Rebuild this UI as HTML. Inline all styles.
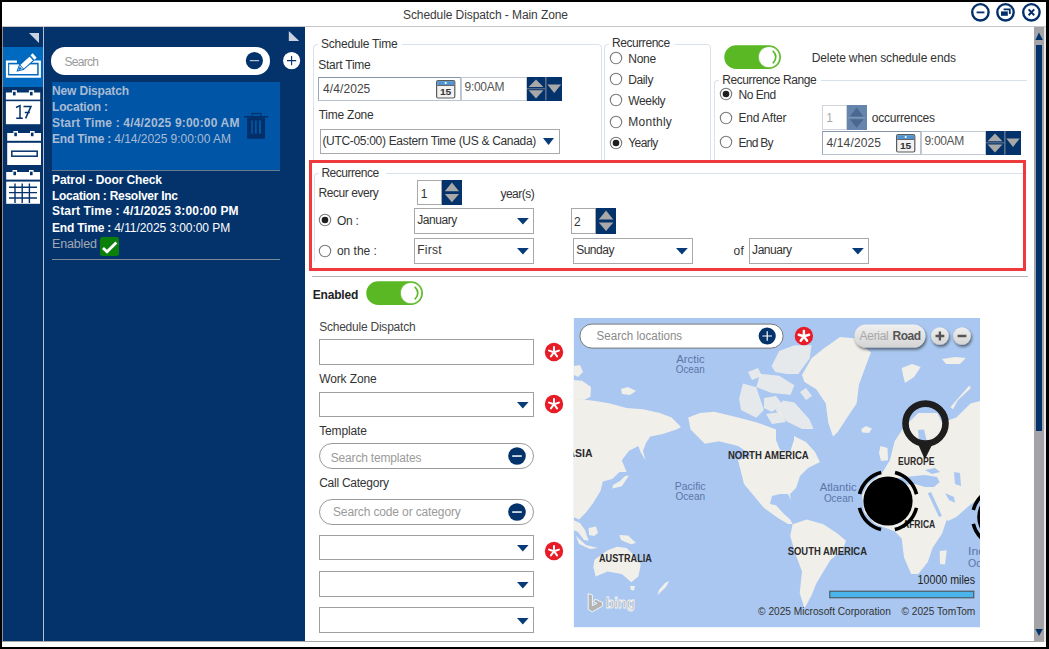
<!DOCTYPE html><html><head><meta charset="utf-8"><style>
html,body{margin:0;padding:0;width:1049px;height:649px;overflow:hidden;background:#fff}
.a{position:absolute}
.t{font-family:"Liberation Sans",sans-serif;white-space:nowrap}
</style></head><body>
<div class="a" style="left:0px;top:0px;width:1049px;height:649px;background:#fff"></div>
<div class="a t" style="left:403px;top:9px;font-size:12px;line-height:12px;color:#3a3a3a;letter-spacing:-0.086px;">Schedule Dispatch - Main Zone</div>
<div class="a" style="left:2px;top:26px;width:1044px;height:1px;background:#c8c8c8"></div>
<svg class="a" style="left:968px;top:0px;" width="76" height="26" viewBox="0 0 76 26">
<circle cx="12.4" cy="12.3" r="8.2" fill="none" stroke="#04306a" stroke-width="2.4"/>
<rect x="8.6" y="11.5" width="7.8" height="1.8" fill="#04306a"/>
<circle cx="37.5" cy="12.3" r="8.2" fill="none" stroke="#04306a" stroke-width="2.4"/>
<rect x="33" y="11.4" width="6.8" height="4.4" fill="#04306a"/>
<path d="M35.6 9.4 H41.8 V14" fill="none" stroke="#04306a" stroke-width="1.8"/>
<circle cx="63.4" cy="12.3" r="8.2" fill="none" stroke="#04306a" stroke-width="2.4"/>
<path d="M60.6 9.4 L66.2 15.2 M66.2 9.4 L60.6 15.2" stroke="#04306a" stroke-width="2"/>
</svg>
<div class="a" style="left:2px;top:27px;width:1px;height:615px;background:#8a8f98"></div>
<div class="a" style="left:3px;top:27px;width:302px;height:614px;background:#04336c"></div>
<div class="a" style="left:43px;top:27px;width:1px;height:614px;background:#b4c0d0"></div>
<div class="a" style="left:2px;top:641px;width:1044px;height:1px;background:#a8a8a8"></div>
<div class="a" style="left:3px;top:47px;width:40px;height:40px;background:#0069c0"></div>
<svg class="a" style="left:28px;top:32px;" width="12" height="12" viewBox="0 0 12 12"><path d="M1 1 H11 V11 Z" fill="#c9d3df"/></svg>
<svg class="a" style="left:3px;top:47px;" width="40" height="40" viewBox="0 0 40 40">
<path d="M14 14.6 H4 V29.6 H36.8 V14.6 H29" fill="none" stroke="#fff" stroke-width="2.2"/>
<rect x="6.2" y="17.4" width="28" height="9.6" fill="#fff"/>
<g transform="translate(14.2,24) rotate(-41.6)">
<path d="M0 0 L5.6 -3 H19.4 V3 H5.6 Z" fill="#fff" stroke="#0069c0" stroke-width="1"/>
<path d="M1.6 0 L4.8 -1.6 V1.6 Z" fill="#0069c0"/>
<rect x="5.6" y="-3" width="0.9" height="6" fill="#0069c0"/>
<rect x="20.4" y="-3" width="3" height="6" fill="#fff"/>
</g>
</svg>
<svg class="a" style="left:3px;top:86px;" width="42" height="42" viewBox="0 0 42 42">
<rect x="2.9" y="6.5" width="34.3" height="7.1" fill="#fff"/>
<rect x="9" y="4.2" width="4.9" height="3" fill="#fff"/>
<rect x="25.9" y="4.2" width="5.2" height="3" fill="#fff"/>
<rect x="10" y="5.8" width="2.6" height="3.6" fill="#04336c"/>
<rect x="27" y="5.8" width="2.6" height="3.6" fill="#04336c"/>
<rect x="2.9" y="15.2" width="34.3" height="23" fill="#fff"/>
<path d="M13 21.5 L17 19.6 V32.2 M13.2 32.2 H19.8 M20.5 20.4 H28 L22.6 32.4 M21.8 26.6 H26.8" fill="none" stroke="#04336c" stroke-width="1.5"/>
</svg>
<svg class="a" style="left:3px;top:128px;" width="42" height="42" viewBox="0 0 42 42">
<rect x="4.2" y="5" width="33.8" height="7.8" fill="#fff"/>
<rect x="10.4" y="3" width="4.6" height="3" fill="#fff"/>
<rect x="27" y="3" width="4.6" height="3" fill="#fff"/>
<rect x="11.3" y="4.6" width="2.6" height="3.6" fill="#04336c"/>
<rect x="27.9" y="4.6" width="2.6" height="3.6" fill="#04336c"/>
<rect x="4.2" y="14.8" width="33.8" height="22.2" fill="#fff"/>
<rect x="8.8" y="23.2" width="25.4" height="5" fill="none" stroke="#04336c" stroke-width="1.5"/>
</svg>
<svg class="a" style="left:3px;top:166px;" width="42" height="42" viewBox="0 0 42 42">
<rect x="3.2" y="6" width="33.8" height="7.6" fill="#fff"/>
<rect x="9.5" y="4" width="4.6" height="3" fill="#fff"/>
<rect x="26" y="4" width="4.6" height="3" fill="#fff"/>
<rect x="10.4" y="5.6" width="2.6" height="3.6" fill="#04336c"/>
<rect x="27" y="5.6" width="2.6" height="3.6" fill="#04336c"/>
<rect x="3.2" y="15.6" width="33.8" height="22.2" fill="#fff"/>
<path d="M6 21.2 H34 M6 26.6 H34 M6 32 H34 M12 17.5 V37 M19.2 17.5 V37 M26.4 17.5 V37" stroke="#04336c" stroke-width="1.4"/>
</svg>
<svg class="a" style="left:287px;top:30px;" width="13" height="12" viewBox="0 0 13 12"><path d="M1.8 1 V11 H12.2 Z" fill="#c9d3df"/></svg>
<div class="a" style="left:51px;top:47px;width:219px;height:28px;background:#fff;border-radius:14px"></div>
<svg class="a" style="left:245px;top:51px;" width="19" height="19" viewBox="0 0 19 19"><circle cx="9.4" cy="9.6" r="8.6" fill="#04336c"/><rect x="4.8" y="9.1" width="9.2" height="1.1" fill="#c8d2e0"/></svg>
<div class="a t" style="left:64.4px;top:55.7px;font-size:12px;line-height:12px;color:#9a9a9a;letter-spacing:-0.684px;">Search</div>
<svg class="a" style="left:282px;top:51px;" width="19" height="19" viewBox="0 0 19 19"><circle cx="9.6" cy="9.6" r="8.6" fill="#fff"/><path d="M9.6 5 V14.2 M5 9.6 H14.2" stroke="#04336c" stroke-width="1.1"/></svg>
<div class="a" style="left:51.5px;top:82px;width:228.6px;height:88px;background:#0055a6"></div>
<div class="a" style="left:51.5px;top:169.6px;width:228.6px;height:1px;background:#6a7a8e"></div>
<div class="a t" style="left:52px;top:84.6px;font-size:12px;line-height:12px;color:#a9bbd3;font-weight:bold;letter-spacing:-0.153px;">New Dispatch</div>
<div class="a t" style="left:52px;top:100.7px;font-size:12px;line-height:12px;color:#a9bbd3;font-weight:bold;letter-spacing:-0.148px;">Location :</div>
<div class="a t" style="left:52px;top:116.7px;font-size:12px;line-height:12px;color:#a9bbd3;font-weight:bold;letter-spacing:0.171px;">Start Time : 4/4/2025 9:00:00 AM</div>
<div class="a t" style="left:52px;top:132.7px;font-size:12px;line-height:12px;color:#a9bbd3"><b style="letter-spacing:-0.2px">End Time : </b><span style="letter-spacing:-0.04px">4/14/2025 9:00:00 AM</span></div>
<svg class="a" style="left:243px;top:111px;" width="27" height="29" viewBox="0 0 27 29">
<rect x="9.1" y="2.5" width="8.8" height="3.4" fill="none" stroke="#04306a" stroke-width="1.2"/>
<rect x="1.2" y="5" width="24" height="1.5" fill="#04306a"/>
<path d="M4.1 6.3 H22 V27.8 H4.1 Z" fill="#04306a"/>
<rect x="8.1" y="9.4" width="1.7" height="13.3" fill="#0055a6"/>
<rect x="12" y="9.4" width="1.8" height="13.3" fill="#0055a6"/>
<rect x="16" y="9.4" width="2" height="13.3" fill="#0055a6"/>
</svg>
<div class="a t" style="left:52px;top:173.8px;font-size:12px;line-height:12px;color:#ffffff;font-weight:bold;letter-spacing:-0.112px;">Patrol - Door Check</div>
<div class="a t" style="left:52px;top:189.7px;font-size:12px;line-height:12px;color:#ffffff;font-weight:bold;letter-spacing:-0.274px;">Location : Resolver Inc</div>
<div class="a t" style="left:52px;top:205.4px;font-size:12px;line-height:12px;color:#ffffff;font-weight:bold;letter-spacing:0.152px;">Start Time : 4/1/2025 3:00:00 PM</div>
<div class="a t" style="left:52px;top:221.9px;font-size:12px;line-height:12px;color:#ffffff"><b style="letter-spacing:-0.2px">End Time : </b><span style="letter-spacing:-0.07px">4/11/2025 3:00:00 PM</span></div>
<div class="a t" style="left:52px;top:237.7px;font-size:12.5px;line-height:12.5px;color:#a2a9b3;letter-spacing:-0.162px;">Enabled</div>
<div class="a" style="left:99.5px;top:237px;width:19.5px;height:19.3px;background:#0a7f0a;border-radius:2.5px"></div>
<svg class="a" style="left:99.5px;top:237px;" width="20" height="20" viewBox="0 0 20 20"><path d="M3 11 L7 14.8 L16.4 5.4" fill="none" stroke="#fff" stroke-width="2.8"/></svg>
<div class="a" style="left:52px;top:258.5px;width:228px;height:1.5px;background:#7d8a9a"></div>
<div class="a" style="left:313.2px;top:44px;width:288.4px;height:130px;border:1px solid #d9e1ea;border-radius:4px;box-sizing:border-box;"></div>
<div class="a" style="left:318px;top:43px;width:84px;height:3px;background:#fff"></div>
<div class="a t" style="left:321px;top:37.7px;font-size:12px;line-height:12px;color:#333;letter-spacing:-0.231px;">Schedule Time</div>
<div class="a t" style="left:318.2px;top:58.7px;font-size:12px;line-height:12px;color:#333;letter-spacing:-0.231px;">Start Time</div>
<div class="a" style="left:318.3px;top:77.2px;width:143.2px;height:23.4px;border:1px solid #b9c3cf;border-top-color:#8494a6;border-left-color:#9aa8b8;box-sizing:border-box;background:#fff"></div>
<div class="a t" style="left:323.1px;top:82.6px;font-size:12px;line-height:12px;color:#444;letter-spacing:0.070px;">4/4/2025</div>
<svg class="a" style="left:436px;top:79.6px;" width="20" height="19" viewBox="0 0 20 19"><rect x="0.6" y="0.6" width="18.2" height="17.4" rx="1.5" fill="#f2f2f2" stroke="#5a5a5a" stroke-width="1.2"/>
<rect x="1.2" y="1.2" width="17" height="3.8" fill="#4f93d2"/>
<circle cx="9.7" cy="3" r="1.1" fill="#fff"/>
<rect x="1.2" y="5" width="17" height="0.9" fill="#555"/>
<text x="9.6" y="15.4" font-family="Liberation Sans" font-weight="bold" font-size="9.6" text-anchor="middle" fill="#333" textLength="11.4" lengthAdjust="spacingAndGlyphs">15</text></svg>
<div class="a" style="left:461.2px;top:77.2px;width:65.5px;height:23.4px;border:1px solid #c3c9d0;box-sizing:border-box;background:#fff;"></div>
<div class="a t" style="left:464.6px;top:80.7px;font-size:12px;line-height:12px;color:#555;letter-spacing:-0.311px;">9:00AM</div>
<div class="a" style="left:526.5px;top:77.2px;width:35.1px;height:23.4px;background:#04336c"></div>
<svg class="a" style="left:526.5px;top:77.2px;" width="35.1" height="23.4" viewBox="0 0 35.1 23.4"><path d="M9.0 2.4 L16.4 10.1 H1.6 Z" fill="#a8a8a8"/>
<rect x="0" y="11.1" width="18" height="1.2" fill="#5a6e8a"/>
<path d="M1.6 13.299999999999999 H16.4 L9.0 21.4 Z" fill="#a8a8a8"/>
<rect x="18" y="0" width="1.6" height="23.4" fill="#5a6e8a"/>
<path d="M20.4 7.4 H34.1 L27.25 16 Z" fill="#a8a8a8"/></svg>
<div class="a t" style="left:318.7px;top:109.1px;font-size:12px;line-height:12px;color:#333;letter-spacing:-0.238px;">Time Zone</div>
<div class="a" style="left:319.9px;top:129.2px;width:239.7px;height:25.3px;border:1px solid #a8a8a8;box-sizing:border-box;background:#fff;"></div>
<div class="a t" style="left:322.4px;top:134.6px;font-size:12px;line-height:12px;color:#333;letter-spacing:-0.311px;">(UTC-05:00) Eastern Time (US &amp; Canada)</div>
<svg class="a" style="left:543px;top:138.4px;" width="12" height="8" viewBox="0 0 12 8"><path d="M0 0 H11 L5.5 7 Z" fill="#063a78"/></svg>
<div class="a" style="left:604px;top:44px;width:107.2px;height:130px;border:1px solid #d9e1ea;border-radius:4px;box-sizing:border-box;"></div>
<div class="a" style="left:609px;top:43px;width:66px;height:3px;background:#fff"></div>
<div class="a t" style="left:612.1px;top:37.4px;font-size:12px;line-height:12px;color:#333;letter-spacing:-0.447px;">Recurrence</div>
<svg class="a" style="left:608.5px;top:50.7px;" width="14" height="14" viewBox="0 0 14 14"><circle cx="7" cy="7" r="5.7" fill="#fff" stroke="#7a7a7a" stroke-width="1.1"/></svg>
<div class="a t" style="left:628.3px;top:52.8px;font-size:12px;line-height:12px;color:#333;letter-spacing:-0.295px;">None</div>
<svg class="a" style="left:608.5px;top:72px;" width="14" height="14" viewBox="0 0 14 14"><circle cx="7" cy="7" r="5.7" fill="#fff" stroke="#7a7a7a" stroke-width="1.1"/></svg>
<div class="a t" style="left:628.3px;top:74.1px;font-size:12px;line-height:12px;color:#333;letter-spacing:-0.393px;">Daily</div>
<svg class="a" style="left:608.5px;top:93.2px;" width="14" height="14" viewBox="0 0 14 14"><circle cx="7" cy="7" r="5.7" fill="#fff" stroke="#7a7a7a" stroke-width="1.1"/></svg>
<div class="a t" style="left:628.3px;top:94.6px;font-size:12px;line-height:12px;color:#333;letter-spacing:-0.364px;">Weekly</div>
<svg class="a" style="left:608.5px;top:114.5px;" width="14" height="14" viewBox="0 0 14 14"><circle cx="7" cy="7" r="5.7" fill="#fff" stroke="#7a7a7a" stroke-width="1.1"/></svg>
<div class="a t" style="left:628.3px;top:115.6px;font-size:12px;line-height:12px;color:#333;letter-spacing:0.247px;">Monthly</div>
<svg class="a" style="left:608.5px;top:135.9px;" width="14" height="14" viewBox="0 0 14 14"><circle cx="7" cy="7" r="5.7" fill="#fff" stroke="#7a7a7a" stroke-width="1.1"/><circle cx="7" cy="7" r="3.3" fill="#1e1e1e"/></svg>
<div class="a t" style="left:628.3px;top:136.6px;font-size:12px;line-height:12px;color:#333;letter-spacing:-0.583px;">Yearly</div>
<svg class="a" style="left:723.8px;top:44.6px;" width="58" height="25" viewBox="0 0 58 25"><rect x="0.3" y="0.3" width="56.6" height="23.8" rx="11.9" fill="#5ab825"/>
<circle cx="45" cy="12.1" r="10.7" fill="#fff" stroke="#5ab825" stroke-width="0.8"/>
<path d="M49.2 6.4 A7.6 7.6 0 0 1 49.2 17.8" fill="none" stroke="#5ab825" stroke-width="1.7" stroke-linecap="round"/></svg>
<div class="a t" style="left:811.8px;top:51.8px;font-size:12px;line-height:12px;color:#333;letter-spacing:-0.135px;">Delete when schedule ends</div>
<div class="a" style="left:714px;top:80px;width:314px;height:94px;border:1px solid #d9e1ea;border-radius:4px;box-sizing:border-box;border-right:none;border-top-right-radius:0"></div>
<div class="a" style="left:719px;top:79px;width:102px;height:3px;background:#fff"></div>
<div class="a t" style="left:722.2px;top:73.9px;font-size:12px;line-height:12px;color:#333;letter-spacing:-0.408px;">Recurrence Range</div>
<svg class="a" style="left:718.5px;top:87.3px;" width="14" height="14" viewBox="0 0 14 14"><circle cx="7" cy="7" r="5.7" fill="#fff" stroke="#7a7a7a" stroke-width="1.1"/><circle cx="7" cy="7" r="3.3" fill="#1e1e1e"/></svg>
<div class="a t" style="left:738.4px;top:88.8px;font-size:12px;line-height:12px;color:#333;letter-spacing:-0.425px;">No End</div>
<svg class="a" style="left:718.5px;top:110.9px;" width="14" height="14" viewBox="0 0 14 14"><circle cx="7" cy="7" r="5.7" fill="#fff" stroke="#7a7a7a" stroke-width="1.1"/></svg>
<div class="a t" style="left:738.4px;top:112.4px;font-size:12px;line-height:12px;color:#333;letter-spacing:-0.146px;">End After</div>
<svg class="a" style="left:718.5px;top:135.1px;" width="14" height="14" viewBox="0 0 14 14"><circle cx="7" cy="7" r="5.7" fill="#fff" stroke="#7a7a7a" stroke-width="1.1"/></svg>
<div class="a t" style="left:738.4px;top:137px;font-size:12px;line-height:12px;color:#333;letter-spacing:-0.718px;">End By</div>
<div class="a" style="left:822.2px;top:105.2px;width:25.3px;height:25.3px;border:1px solid #cfd4da;box-sizing:border-box;background:#fff;"></div>
<div class="a t" style="left:826.2px;top:112px;font-size:12px;line-height:12px;color:#aaa;letter-spacing:0.000px;">1</div>
<div class="a" style="left:847.3px;top:105.2px;width:19.3px;height:25.3px;background:#6585ad"></div>
<svg class="a" style="left:847.3px;top:105.2px;" width="19.3" height="25.3" viewBox="0 0 19.3 25.3"><path d="M9.65 2.6 L16.5 11.450000000000001 H2.8 Z" fill="#4a6890"/><rect x="1" y="12.15" width="17.3" height="1.2" fill="#7d97b8"/><path d="M2.8 14.25 H16.5 L9.65 22.7 Z" fill="#4a6890"/></svg>
<div class="a t" style="left:871.8px;top:112.4px;font-size:12px;line-height:12px;color:#333;letter-spacing:-0.216px;">occurrences</div>
<div class="a" style="left:822.2px;top:131px;width:99.2px;height:23.6px;border:1px solid #b9c3cf;border-top-color:#8494a6;border-left-color:#9aa8b8;box-sizing:border-box;background:#fff"></div>
<div class="a t" style="left:826.5px;top:137.2px;font-size:12px;line-height:12px;color:#444;letter-spacing:0.140px;">4/14/2025</div>
<svg class="a" style="left:895.6px;top:133.6px;" width="20" height="19" viewBox="0 0 20 19"><rect x="0.6" y="0.6" width="18.2" height="17.4" rx="1.5" fill="#f2f2f2" stroke="#5a5a5a" stroke-width="1.2"/>
<rect x="1.2" y="1.2" width="17" height="3.8" fill="#4f93d2"/>
<circle cx="9.7" cy="3" r="1.1" fill="#fff"/>
<rect x="1.2" y="5" width="17" height="0.9" fill="#555"/>
<text x="9.6" y="15.4" font-family="Liberation Sans" font-weight="bold" font-size="9.6" text-anchor="middle" fill="#333" textLength="11.4" lengthAdjust="spacingAndGlyphs">15</text></svg>
<div class="a" style="left:921.2px;top:131px;width:65.2px;height:23.6px;border:1px solid #c3c9d0;box-sizing:border-box;background:#fff;"></div>
<div class="a t" style="left:924.5px;top:134.5px;font-size:12px;line-height:12px;color:#555;letter-spacing:-0.311px;">9:00AM</div>
<div class="a" style="left:986.2px;top:131px;width:34.7px;height:23.6px;background:#04336c"></div>
<svg class="a" style="left:986.2px;top:131px;" width="34.7" height="23.6" viewBox="0 0 34.7 23.6"><path d="M9.0 2.4 L16.4 10.200000000000001 H1.6 Z" fill="#a8a8a8"/>
<rect x="0" y="11.200000000000001" width="18" height="1.2" fill="#5a6e8a"/>
<path d="M1.6 13.4 H16.4 L9.0 21.6 Z" fill="#a8a8a8"/>
<rect x="18" y="0" width="1.6" height="23.6" fill="#5a6e8a"/>
<path d="M20.4 7.4 H33.7 L27.05 16 Z" fill="#a8a8a8"/></svg>
<div class="a" style="left:1027.2px;top:79px;width:6.8px;height:96px;background:#fff"></div>
<div class="a" style="left:309px;top:160px;width:717px;height:111px;border:3px solid #ee3a3d;box-sizing:border-box;background:#fff"></div>
<div class="a" style="left:313.6px;top:172.7px;width:709.6px;height:93px;border:1px solid #d9e1ea;border-radius:4px;box-sizing:border-box;border-right:none;border-top-right-radius:0"></div>
<div class="a" style="left:319px;top:171.7px;width:67px;height:3px;background:#fff"></div>
<div class="a" style="left:312px;top:262px;width:711px;height:5px;background:#fff"></div>
<div class="a t" style="left:321.4px;top:167px;font-size:12px;line-height:12px;color:#333;letter-spacing:-0.470px;">Recurrence</div>
<div class="a t" style="left:318.6px;top:187.3px;font-size:12px;line-height:12px;color:#333;letter-spacing:-0.459px;">Recur every</div>
<div class="a" style="left:417.2px;top:180.3px;width:24.8px;height:24.9px;border:1px solid #a8a8a8;box-sizing:border-box;background:#fff;"></div>
<div class="a t" style="left:420.8px;top:187.6px;font-size:12px;line-height:12px;color:#333;letter-spacing:0.000px;">1</div>
<div class="a" style="left:442px;top:180.3px;width:19.8px;height:24.9px;background:#04336c"></div>
<svg class="a" style="left:442px;top:180.3px;" width="19.8" height="24.9" viewBox="0 0 19.8 24.9"><path d="M9.9 2.6 L17.0 11.25 H2.8 Z" fill="#a8a8a8"/><rect x="1" y="11.95" width="17.8" height="1.2" fill="#04336c"/><path d="M2.8 14.049999999999999 H17.0 L9.9 22.299999999999997 Z" fill="#a8a8a8"/></svg>
<div class="a t" style="left:500.4px;top:187.9px;font-size:12px;line-height:12px;color:#333;letter-spacing:-0.506px;">year(s)</div>
<svg class="a" style="left:317.9px;top:213.2px;" width="14" height="14" viewBox="0 0 14 14"><circle cx="7" cy="7" r="5.7" fill="#fff" stroke="#7a7a7a" stroke-width="1.1"/><circle cx="7" cy="7" r="3.3" fill="#1e1e1e"/></svg>
<div class="a t" style="left:336.9px;top:215.3px;font-size:12px;line-height:12px;color:#333;letter-spacing:-0.226px;">On :</div>
<div class="a" style="left:414.3px;top:208.2px;width:119.7px;height:25.5px;border:1px solid #a8a8a8;box-sizing:border-box;background:#fff;"></div>
<div class="a t" style="left:417.2px;top:213.6px;font-size:12px;line-height:12px;color:#333;letter-spacing:-0.448px;">January</div>
<svg class="a" style="left:517.2px;top:218.2px;" width="12.8" height="7.4" viewBox="0 0 12.8 7.4"><path d="M0 0 H11.8 L5.9 6.4 Z" fill="#063a78"/></svg>
<div class="a" style="left:571px;top:208.1px;width:24.8px;height:25.6px;border:1px solid #a8a8a8;box-sizing:border-box;background:#fff;"></div>
<div class="a t" style="left:574.1px;top:215.8px;font-size:12px;line-height:12px;color:#333;letter-spacing:0.000px;">2</div>
<div class="a" style="left:595.8px;top:208.1px;width:20.1px;height:25.6px;background:#04336c"></div>
<svg class="a" style="left:595.8px;top:208.1px;" width="20.1" height="25.6" viewBox="0 0 20.1 25.6"><path d="M10.05 2.6 L17.3 11.600000000000001 H2.8 Z" fill="#a8a8a8"/><rect x="1" y="12.3" width="18.1" height="1.2" fill="#04336c"/><path d="M2.8 14.4 H17.3 L10.05 23.0 Z" fill="#a8a8a8"/></svg>
<svg class="a" style="left:317.9px;top:243.7px;" width="14" height="14" viewBox="0 0 14 14"><circle cx="7" cy="7" r="5.7" fill="#fff" stroke="#7a7a7a" stroke-width="1.1"/></svg>
<div class="a t" style="left:336.9px;top:244.6px;font-size:12px;line-height:12px;color:#333;letter-spacing:-0.004px;">on the :</div>
<div class="a" style="left:414.3px;top:238px;width:119.7px;height:25.5px;border:1px solid #a8a8a8;box-sizing:border-box;background:#fff;"></div>
<div class="a t" style="left:417.2px;top:243.7px;font-size:12px;line-height:12px;color:#333;letter-spacing:0.293px;">First</div>
<svg class="a" style="left:517.2px;top:248.2px;" width="12.8" height="7.4" viewBox="0 0 12.8 7.4"><path d="M0 0 H11.8 L5.9 6.4 Z" fill="#063a78"/></svg>
<div class="a" style="left:573.2px;top:238.2px;width:119.6px;height:25.4px;border:1px solid #a8a8a8;box-sizing:border-box;background:#fff;"></div>
<div class="a t" style="left:576.2px;top:243.6px;font-size:12px;line-height:12px;color:#333;letter-spacing:-0.500px;">Sunday</div>
<svg class="a" style="left:675.5px;top:248.2px;" width="12.8" height="7.4" viewBox="0 0 12.8 7.4"><path d="M0 0 H11.8 L5.9 6.4 Z" fill="#063a78"/></svg>
<div class="a t" style="left:733.4px;top:244.8px;font-size:12px;line-height:12px;color:#333;letter-spacing:0.492px;">of</div>
<div class="a" style="left:749.2px;top:238px;width:119.9px;height:25.7px;border:1px solid #a8a8a8;box-sizing:border-box;background:#fff;"></div>
<div class="a t" style="left:752.1px;top:243.5px;font-size:12px;line-height:12px;color:#333;letter-spacing:-0.448px;">January</div>
<svg class="a" style="left:852.2px;top:248.1px;" width="12.8" height="7.6" viewBox="0 0 12.8 7.6"><path d="M0 0 H11.8 L5.9 6.6 Z" fill="#063a78"/></svg>
<div class="a" style="left:312.4px;top:276px;width:715.3px;height:1.2px;background:#b4b4b4"></div>
<div class="a t" style="left:312.8px;top:288.7px;font-size:12px;line-height:12px;color:#222;font-weight:bold;letter-spacing:-0.196px;">Enabled</div>
<svg class="a" style="left:365.8px;top:281.3px;" width="58" height="25" viewBox="0 0 58 25"><rect x="0.3" y="0.3" width="56.6" height="23.8" rx="11.9" fill="#5ab825"/>
<circle cx="45" cy="12.1" r="10.7" fill="#fff" stroke="#5ab825" stroke-width="0.8"/>
<path d="M49.2 6.4 A7.6 7.6 0 0 1 49.2 17.8" fill="none" stroke="#5ab825" stroke-width="1.7" stroke-linecap="round"/></svg>
<div class="a t" style="left:319.2px;top:320.5px;font-size:12px;line-height:12px;color:#444;letter-spacing:-0.229px;">Schedule Dispatch</div>
<div class="a" style="left:319.2px;top:339.3px;width:214.9px;height:25.5px;border:1px solid #a0a0a0;box-sizing:border-box;background:#fff;"></div>
<svg class="a" style="left:543.6px;top:342px;" width="20" height="20" viewBox="0 0 20 20"><circle cx="10" cy="10" r="9.2" fill="#e81c26"/>
<path d="M10.00 10.20 L10.00 5.00 M10.00 10.20 L14.95 8.59 M10.00 10.20 L13.06 14.41 M10.00 10.20 L6.94 14.41 M10.00 10.20 L5.05 8.59 " stroke="#fff" stroke-width="2.0" stroke-linecap="round"/></svg>
<div class="a t" style="left:319.2px;top:373px;font-size:12px;line-height:12px;color:#333;letter-spacing:-0.121px;">Work Zone</div>
<div class="a" style="left:319.2px;top:391.5px;width:214.9px;height:25.3px;border:1px solid #a0a0a0;box-sizing:border-box;background:#fff;"></div>
<svg class="a" style="left:517.4px;top:401.5px;" width="12.6" height="7.6" viewBox="0 0 12.6 7.6"><path d="M0 0 H11.6 L5.8 6.6 Z" fill="#063a78"/></svg>
<svg class="a" style="left:543.6px;top:394px;" width="20" height="20" viewBox="0 0 20 20"><circle cx="10" cy="10" r="9.2" fill="#e81c26"/>
<path d="M10.00 10.20 L10.00 5.00 M10.00 10.20 L14.95 8.59 M10.00 10.20 L13.06 14.41 M10.00 10.20 L6.94 14.41 M10.00 10.20 L5.05 8.59 " stroke="#fff" stroke-width="2.0" stroke-linecap="round"/></svg>
<div class="a t" style="left:319.2px;top:424.9px;font-size:12px;line-height:12px;color:#333;letter-spacing:-0.127px;">Template</div>
<div class="a" style="left:318.8px;top:442.6px;width:215.3px;height:26.1px;border:1px solid #9a9a9a;border-radius:13.05px;box-sizing:border-box;background:#fff"></div>
<div class="a t" style="left:330.8px;top:451.7px;font-size:12px;line-height:12px;color:#9a9a9a;letter-spacing:-0.185px;">Search templates</div>
<svg class="a" style="left:507.20000000000005px;top:445.5px;" width="20" height="20" viewBox="0 0 20 20"><circle cx="10" cy="10" r="8.8" fill="#04336c"/><rect x="5.2" y="9.3" width="9.6" height="1.5" fill="#fff"/></svg>
<div class="a t" style="left:319.2px;top:476.9px;font-size:12px;line-height:12px;color:#333;letter-spacing:-0.250px;">Call Category</div>
<div class="a" style="left:318.8px;top:498.9px;width:215.3px;height:25.9px;border:1px solid #9a9a9a;border-radius:12.95px;box-sizing:border-box;background:#fff"></div>
<div class="a t" style="left:333px;top:506px;font-size:12px;line-height:12px;color:#9a9a9a;letter-spacing:-0.134px;">Search code or category</div>
<svg class="a" style="left:507.20000000000005px;top:501.8px;" width="20" height="20" viewBox="0 0 20 20"><circle cx="10" cy="10" r="8.8" fill="#04336c"/><rect x="5.2" y="9.3" width="9.6" height="1.5" fill="#fff"/></svg>
<div class="a" style="left:319.2px;top:534.7px;width:214.9px;height:25.6px;border:1px solid #a0a0a0;box-sizing:border-box;background:#fff;"></div>
<svg class="a" style="left:517.4px;top:545.0px;" width="12.6" height="7.6" viewBox="0 0 12.6 7.6"><path d="M0 0 H11.6 L5.8 6.6 Z" fill="#063a78"/></svg>
<div class="a" style="left:319.2px;top:571.2px;width:214.9px;height:25.6px;border:1px solid #a0a0a0;box-sizing:border-box;background:#fff;"></div>
<svg class="a" style="left:517.4px;top:581.5px;" width="12.6" height="7.6" viewBox="0 0 12.6 7.6"><path d="M0 0 H11.6 L5.8 6.6 Z" fill="#063a78"/></svg>
<div class="a" style="left:319.2px;top:607.4px;width:214.9px;height:25.6px;border:1px solid #a0a0a0;box-sizing:border-box;background:#fff;"></div>
<svg class="a" style="left:517.4px;top:617.6999999999999px;" width="12.6" height="7.6" viewBox="0 0 12.6 7.6"><path d="M0 0 H11.6 L5.8 6.6 Z" fill="#063a78"/></svg>
<svg class="a" style="left:543.6px;top:541px;" width="20" height="20" viewBox="0 0 20 20"><circle cx="10" cy="10" r="9.2" fill="#e81c26"/>
<path d="M10.00 10.20 L10.00 5.00 M10.00 10.20 L14.95 8.59 M10.00 10.20 L13.06 14.41 M10.00 10.20 L6.94 14.41 M10.00 10.20 L5.05 8.59 " stroke="#fff" stroke-width="2.0" stroke-linecap="round"/></svg>
<div class="a" style="left:1034px;top:27px;width:10px;height:614px;background:#a3a3a8"></div>
<div class="a" style="left:1044px;top:27px;width:2px;height:615px;background:#e6e6e6"></div>
<svg class="a" style="left:1034px;top:27px;" width="10" height="614" viewBox="0 0 10 614"><path d="M5 5.6 L8.8 13 H1.4 Z" fill="#04336c"/><rect x="2" y="18" width="6" height="386" fill="#04336c"/><path d="M1.4 602 H8.8 L5 609 Z" fill="#04336c"/></svg>
<svg class="a" style="left:0;top:0" width="1049" height="649" viewBox="0 0 1049 649"><defs><clipPath id="mc"><rect x="573.6" y="318" width="406.4" height="309.4"/></clipPath>
<filter id="sh" x="-20%" y="-30%" width="150%" height="190%"><feGaussianBlur in="SourceAlpha" stdDeviation="1.6"/><feOffset dx="1" dy="2"/><feComponentTransfer><feFuncA type="linear" slope="0.55"/></feComponentTransfer><feMerge><feMergeNode/><feMergeNode in="SourceGraphic"/></feMerge></filter>
<linearGradient id="gg" x1="0" y1="0" x2="0" y2="1"><stop offset="0" stop-color="#f0f0f0"/><stop offset="1" stop-color="#d4d4d4"/></linearGradient></defs>
<g clip-path="url(#mc)">
<rect x="573.6" y="318" width="406.4" height="309.4" fill="#a9c7f0"/>
<g fill="#f1efea"><path d="M573.5 398.6 L595.7 401.0 L610.0 403.4 L626.6 408.0 L643.0 409.3 L659.8 413.0 L671.6 417.6 L681.0 427.0 L676.4 429.5 L662.0 434.2 L650.3 436.6 L646.0 443.0 L643.0 450.8 L645.5 460.3 L640.5 452.0 L638.4 446.0 L629.0 450.8 L621.8 460.3 L626.6 472.0 L619.4 472.0 L612.3 479.0 L602.8 481.5 L600.5 491.0 L593.3 502.8 L586.2 512.3 L579.0 519.4 L573.5 517.0 Z"/><path d="M573.5 380.0 L582.0 380.8 L591.0 387.0 L590.5 396.8 L584.3 400.0 L573.5 399.0 Z"/><path d="M574.0 366.0 L580.0 365.0 L583.0 372.0 L578.0 377.0 L574.0 375.0 Z"/><path d="M621.0 389.0 L628.0 387.0 L636.0 391.0 L630.0 395.0 L622.0 394.0 Z"/><path d="M629.0 475.6 L626.0 480.0 L621.8 486.2 L612.3 488.6 L613.0 485.0 L620.0 481.0 L625.0 476.0 Z"/><path d="M573.5 520.0 L580.0 523.0 L585.0 530.0 L588.6 540.8 L584.0 540.0 L578.0 532.0 L573.5 530.0 Z"/><path d="M588.6 528.0 L596.0 526.5 L598.0 533.0 L594.0 536.0 L589.0 535.0 Z"/><path d="M576.0 536.0 L586.0 545.0 L598.0 548.0 L590.0 549.0 L579.0 544.0 Z"/><path d="M619.4 535.0 L628.0 535.5 L636.0 543.0 L631.0 544.3 L621.0 540.0 Z"/><path d="M594.5 559.8 L607.6 550.3 L617.0 546.7 L626.6 547.9 L633.7 555.0 L640.8 564.5 L638.4 576.4 L631.3 582.3 L621.8 574.0 L607.6 571.6 L595.7 576.4 L593.3 566.9 Z"/><path d="M630.0 586.0 L635.0 586.0 L634.0 590.6 L631.0 590.0 Z"/><path d="M669.2 581.1 L666.0 587.0 L657.4 595.3 L659.0 590.0 L665.0 583.0 Z"/><path d="M688.2 417.6 L700.0 413.0 L714.3 411.7 L738.0 417.6 L757.0 422.4 L776.0 429.5 L776.0 440.0 L780.0 450.0 L790.0 452.0 L794.0 440.0 L794.0 436.0 L806.0 442.0 L815.0 452.0 L820.0 462.0 L808.0 468.0 L800.0 476.0 L796.0 488.0 L790.0 494.0 L791.0 500.0 L788.0 494.0 L780.0 494.0 L772.0 496.0 L770.0 504.0 L776.0 505.2 L784.0 514.0 L790.2 519.4 L792.6 524.0 L788.0 524.0 L778.0 518.0 L764.0 508.0 L754.0 496.0 L744.0 484.0 L740.0 468.0 L738.0 460.3 L752.3 455.6 L738.0 446.0 L719.0 441.3 L704.8 443.7 L690.6 429.5 Z"/><path d="M802.0 375.0 L811.6 358.3 L823.4 348.8 L840.0 337.0 L854.3 338.2 L870.9 352.4 L866.0 365.4 L859.0 384.4 L856.6 403.4 L847.2 417.6 L837.7 431.9 L833.0 436.6 L828.2 422.4 L825.8 403.4 L816.3 389.2 L804.5 382.0 Z"/><path d="M861.4 429.0 L866.0 426.0 L872.0 428.5 L869.0 433.0 L862.0 432.5 Z"/><path d="M901.7 368.0 L912.0 364.0 L920.7 367.0 L914.0 377.0 L905.0 383.0 L903.0 375.0 Z"/><path d="M942.0 359.0 L955.0 357.0 L965.8 358.0 L960.0 364.0 L946.0 364.0 Z"/><path d="M969.3 385.6 L971.0 388.0 L958.0 400.0 L953.0 409.3 L950.5 407.0 Z"/><path d="M882.7 472.0 L889.9 460.3 L894.6 441.3 L904.0 427.0 L918.3 412.9 L937.3 412.9 L942.0 422.4 L956.3 417.6 L970.5 403.4 L980.0 401.0 L980.0 498.0 L970.0 505.0 L956.3 517.0 L948.0 521.0 L946.8 519.4 L942.0 533.7 L932.5 547.9 L927.8 562.0 L918.3 574.0 L911.2 574.0 L904.0 557.4 L901.7 538.4 L894.6 531.3 L875.0 524.0 L864.0 512.0 L862.0 495.0 L868.0 484.0 L876.0 478.0 Z"/><path d="M939.7 551.0 L946.8 550.3 L945.0 564.5 L940.0 564.0 Z"/><path d="M880.4 446.0 L887.5 448.0 L888.0 460.3 L881.0 461.0 L879.0 453.0 Z"/><path d="M792.6 524.2 L806.8 519.4 L823.4 524.2 L837.7 533.7 L846.0 540.8 L842.4 550.3 L830.6 559.8 L823.4 571.6 L816.3 583.5 L811.6 595.3 L804.5 608.4 L799.7 593.0 L802.0 571.6 L795.0 552.6 L790.2 536.0 Z"/></g><g fill="#f1efea" fill-opacity="0.85"><path d="M743.0 383.4 L756.3 387.2 L763.9 410.0 L756.3 417.7 L741.0 410.0 L739.1 398.6 Z"/><path d="M760.0 373.9 L779.1 375.8 L794.4 385.3 L790.6 394.8 L771.5 392.9 L756.3 387.2 Z"/><path d="M771.5 366.2 L779.1 351.0 L794.4 345.3 L811.6 345.3 L809.6 358.6 L798.2 373.9 L786.8 373.9 L775.3 372.0 Z"/><path d="M783.0 400.5 L794.4 402.4 L809.6 419.6 L813.5 429.0 L802.0 429.0 L786.8 421.5 L775.3 410.0 Z"/><path d="M764.0 398.0 L776.0 396.0 L782.0 404.0 L772.0 412.0 L764.0 408.0 Z"/><path d="M748.0 372.0 L758.0 368.0 L762.0 376.0 L752.0 380.0 Z"/><path d="M800.0 392.0 L806.0 388.0 L812.0 396.0 L806.0 400.0 Z"/><path d="M766.0 414.0 L780.0 412.0 L786.0 422.0 L772.0 424.0 Z"/></g><g fill="#a9c7f0"><path d="M890.0 480.0 L905.0 477.0 L915.0 476.0 L925.0 475.0 L937.0 477.0 L939.7 482.0 L934.0 487.0 L925.0 487.0 L915.0 484.0 L900.0 485.0 L890.0 486.0 Z"/><path d="M925.0 470.0 L935.0 468.0 L940.0 472.0 L932.0 474.0 Z"/><path d="M954.0 472.0 L960.0 473.0 L961.0 486.0 L955.0 484.0 Z"/><path d="M927.8 493.3 L931.0 492.0 L942.0 516.0 L939.0 517.0 Z"/><path d="M945.0 493.0 L954.0 497.0 L955.0 502.7 L949.0 500.0 Z"/><path d="M918.0 430.0 L924.0 429.5 L928.0 446.0 L922.0 447.0 L919.0 440.0 Z"/></g>
<text x="676.2" y="363" font-family="Liberation Sans" font-size="10"  fill="#5b76ab" textLength="28.5" lengthAdjust="spacingAndGlyphs">Arctic</text><text x="675.8" y="373" font-family="Liberation Sans" font-size="10"  fill="#5b76ab" textLength="29" lengthAdjust="spacingAndGlyphs">Ocean</text><text x="674.8" y="490.2" font-family="Liberation Sans" font-size="10"  fill="#5b76ab" textLength="30.8" lengthAdjust="spacingAndGlyphs">Pacific</text><text x="675.5" y="500" font-family="Liberation Sans" font-size="10"  fill="#5b76ab" textLength="29.6" lengthAdjust="spacingAndGlyphs">Ocean</text><text x="819.7" y="490.9" font-family="Liberation Sans" font-size="10"  fill="#5b76ab" textLength="36.9" lengthAdjust="spacingAndGlyphs">Atlantic</text><text x="823.9" y="501.9" font-family="Liberation Sans" font-size="10"  fill="#5b76ab" textLength="29.3" lengthAdjust="spacingAndGlyphs">Ocean</text><text x="968" y="555" font-family="Liberation Sans" font-size="10"  fill="#5b76ab" textLength="17" lengthAdjust="spacingAndGlyphs">Ind</text><text x="968" y="566.5" font-family="Liberation Sans" font-size="10"  fill="#5b76ab" textLength="13.5" lengthAdjust="spacingAndGlyphs">Oc</text><text x="567.5" y="456.5" font-family="Liberation Sans" font-size="10" font-weight="bold" fill="#2a2a2a" textLength="25" lengthAdjust="spacingAndGlyphs">ASIA</text><text x="727.9" y="459" font-family="Liberation Sans" font-size="10" font-weight="bold" fill="#2a2a2a" textLength="80.8" lengthAdjust="spacingAndGlyphs">NORTH AMERICA</text><text x="898.1" y="464.5" font-family="Liberation Sans" font-size="10" font-weight="bold" fill="#2a2a2a" textLength="36.3" lengthAdjust="spacingAndGlyphs">EUROPE</text><text x="903" y="528.4" font-family="Liberation Sans" font-size="10" font-weight="bold" fill="#2a2a2a" textLength="32.2" lengthAdjust="spacingAndGlyphs">AFRICA</text><text x="787.7" y="554.8" font-family="Liberation Sans" font-size="10" font-weight="bold" fill="#2a2a2a" textLength="79.3" lengthAdjust="spacingAndGlyphs">SOUTH AMERICA</text><text x="599" y="561.7" font-family="Liberation Sans" font-size="10" font-weight="bold" fill="#2a2a2a" textLength="52.9" lengthAdjust="spacingAndGlyphs">AUSTRALIA</text>
<circle cx="925.5" cy="423.6" r="20" fill="none" stroke="#1e1e1e" stroke-width="6.6"/>
<path d="M917.6 443 H933 L924.8 459.6 Z" fill="#1e1e1e"/>
<circle cx="888" cy="501" r="24.6" fill="#000"/>
<circle cx="888" cy="501" r="29.3" fill="none" stroke="#000" stroke-width="3.6" stroke-dasharray="32 14" stroke-dashoffset="-7"/>
<circle cx="1001.8" cy="517" r="24.6" fill="#000"/>
<circle cx="1001.8" cy="517" r="29.3" fill="none" stroke="#000" stroke-width="3.6" stroke-dasharray="32 14" stroke-dashoffset="-7"/>
<text x="917.6" y="584" font-family="Liberation Sans" font-size="12" fill="#222" textLength="57.5" lengthAdjust="spacingAndGlyphs">10000 miles</text>
<rect x="829.8" y="591.2" width="144" height="6.6" fill="#4ab4ec" stroke="#4a4a4a" stroke-width="1"/>
<text x="758.1" y="614.5" font-family="Liberation Sans" font-size="11" fill="#333" textLength="132.7" lengthAdjust="spacingAndGlyphs">© 2025 Microsoft Corporation</text>
<text x="901.5" y="614.8" font-family="Liberation Sans" font-size="11" fill="#333" textLength="73.8" lengthAdjust="spacingAndGlyphs">© 2025 TomTom</text>
<g fill="#b4b4b4" stroke="#f4f4f4" stroke-width="1"><path d="M588.2 593.6 L592.4 595 V605.6 L597 603.4 L593.6 601.8 L595 599 L602.6 602.6 V606 L592.4 611.8 L588.2 609.4 Z"/></g>
<text x="605.8" y="607.6" font-family="Liberation Sans" font-size="15.5" font-weight="bold" fill="#b4b4b4" stroke="#f4f4f4" stroke-width="0.8" textLength="29" lengthAdjust="spacingAndGlyphs">bing</text>
<rect x="579.9" y="324.1" width="203.2" height="24" rx="12" fill="#fff" stroke="#777" stroke-width="1"/>
<text x="596.6" y="339.6" font-family="Liberation Sans" font-size="12" fill="#8a8a8a" textLength="85.5" lengthAdjust="spacingAndGlyphs">Search locations</text>
<circle cx="767.2" cy="336" r="8.6" fill="#04336c"/>
<path d="M767.2 331.2 V340.8 M762.4 336 H772" stroke="#fff" stroke-width="1.2"/>
<circle cx="803.9" cy="336" r="9.2" fill="#e81c26"/>
<path d="M803.90 336.40 L803.90 331.00 M803.90 336.40 L809.04 334.73 M803.90 336.40 L807.07 340.77 M803.90 336.40 L800.73 340.77 M803.90 336.40 L798.76 334.73 " stroke="#fff" stroke-width="2.5" stroke-linecap="round"/>
<g filter="url(#sh)">
<rect x="854.4" y="324.4" width="71" height="23.2" rx="11.6" fill="url(#gg)"/>
<circle cx="939.9" cy="336" r="8.8" fill="url(#gg)"/>
<circle cx="962" cy="336" r="8.8" fill="url(#gg)"/>
</g>
<text x="859.6" y="340.4" font-family="Liberation Sans" font-size="12" fill="#a8a8a8" letter-spacing="-0.3">Aerial</text>
<text x="892.4" y="340.4" font-family="Liberation Sans" font-size="12" font-weight="bold" fill="#555" letter-spacing="-0.4">Road</text>
<path d="M939.9 331.6 V340.4 M935.5 336 H944.3" stroke="#555" stroke-width="2.4"/>
<path d="M957.6 336 H966.4" stroke="#555" stroke-width="2.4"/>
</g></svg>
<div class="a" style="left:0px;top:0px;width:1049px;height:2px;background:#000"></div>
<div class="a" style="left:0px;top:0px;width:2px;height:649px;background:#000"></div>
<div class="a" style="left:1046px;top:0px;width:3px;height:649px;background:#000"></div>
<div class="a" style="left:0px;top:647px;width:1049px;height:2px;background:#000"></div>
</body></html>
